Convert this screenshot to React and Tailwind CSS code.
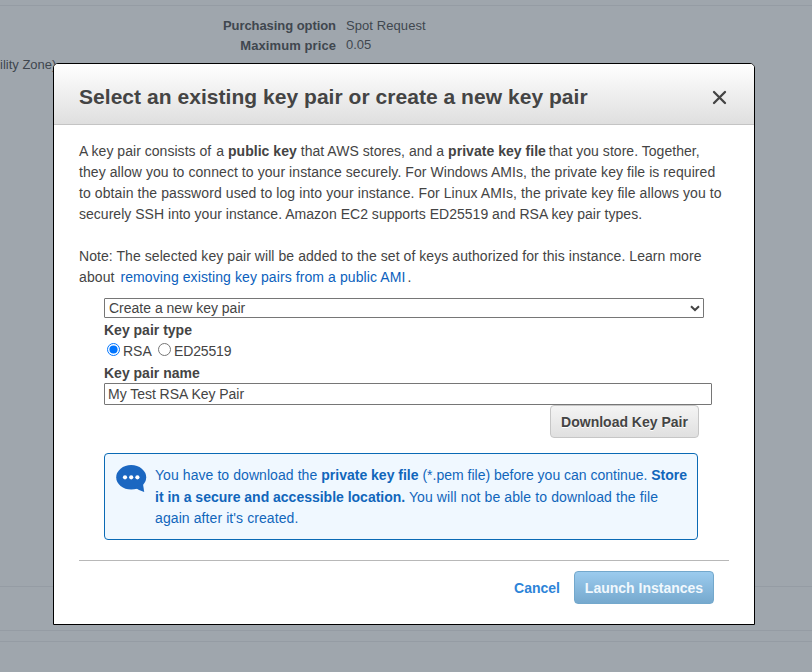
import React from "react";

function Line({ className = "", children }) {
  return (
    <div className="h-[21px] whitespace-nowrap">
      <span className={className}>{children}</span>
    </div>
  );
}

function PageBehind() {
  return (
    <div className="flex h-full flex-col text-[13px] text-[#40474f]">
      <div className="h-[6px] border-b border-[#959ca4]" />
      <div className="flex h-[581px] flex-col border-b border-[#959ca4] pt-[10px]">
        <div className="flex h-[20px] gap-[10px] leading-[20px]">
          <div className="w-[336px] text-right font-bold tracking-[-0.06px]">Purchasing option</div>
          <div className="tracking-[0.08px]">Spot Request</div>
        </div>
        <div className="flex h-[20px] gap-[10px] leading-[20px]">
          <div className="w-[336px] text-right font-bold tracking-[0.08px]">Maximum price</div>
          <div className="-mt-px">0.05</div>
        </div>
        <div className="-mt-[1px] leading-[20px]">ility Zone)</div>
      </div>
      <div className="h-[44px] border-b border-[#959ca4]" />
      <div className="h-[11px] border-b border-[#959ca4]" />
    </div>
  );
}

function Radio({ checked }) {
  return (
    <svg width="13" height="13" viewBox="0 0 13 13" className="shrink-0">
      <circle cx="6.5" cy="6.5" r="6" fill="#fff" stroke={checked ? "#0075ff" : "#767676"} />
      {checked && <circle cx="6.5" cy="6.5" r="4.1" fill="#0075ff" />}
    </svg>
  );
}

export default function App() {
  return (
    <div className="relative h-[672px] w-[812px] overflow-hidden bg-[#9fa6ad] font-['Liberation_Sans',Arial,sans-serif]">
      <PageBehind />
      <div className="absolute left-[53px] top-[63px] flex h-[562px] w-[702px] flex-col rounded-t-[5px] border border-black bg-white text-[14px] leading-[21px] text-[#444]">
        <div className="flex h-[61px] shrink-0 items-center justify-between rounded-t-[4px] border-b border-[#c4c4c4] bg-linear-to-b from-white to-[#dfdfdf] pl-[25px] pr-[27px]">
          <h1 className="mt-[5px] whitespace-nowrap text-[21px] font-bold leading-[26px] tracking-[0.04px]">
            Select an existing key pair or create a new key pair
          </h1>
          <svg width="15" height="15" viewBox="0 0 15 15" className="mt-[7px]" stroke="#444" strokeWidth="2.3" strokeLinecap="round">
            <path d="M2 2 13 13M13 2 2 13" />
          </svg>
        </div>

        <div className="px-[25px] pt-[16px]">
          <Line className="tracking-[0.035px]">A key pair consists of<span className="ml-px"> a </span><b>public key</b> that AWS stores, and a <b>private key file</b><span className="-ml-px"> that you store. Together,</span></Line>
          <Line className="tracking-[0.068px]">they allow you to connect to your instance securely. For Windows AMIs, the private key file is required</Line>
          <Line className="tracking-[0.088px]">to obtain the password used to log into your instance. For Linux AMIs, the private key file allows you to</Line>
          <Line className="tracking-[0.024px]">securely SSH into your instance. Amazon EC2 supports ED25519 and RSA key pair types.</Line>
          <div className="h-[21px]" />
          <Line className="tracking-[0.064px]">Note: The selected key pair will be added to the set of keys authorized for this instance. Learn more</Line>
          <Line className="tracking-[0.09px]">about <a className="ml-[2px] text-[#0b61bd]">removing existing key pairs from a public AMI</a><span className="ml-[2px]">.</span></Line>
        </div>

        <div className="mt-[10px] flex flex-col pl-[50px]">
          <div className="flex h-[20px] w-[600px] items-center justify-between rounded-[1px] border border-[#767676] pl-[4px] pr-[3px]">
            <span>Create a new key pair</span>
            <svg width="10" height="7" viewBox="0 0 10 7" fill="none" stroke="#444" strokeWidth="2">
              <path d="M1 1.2 5 5 9 1.2" />
            </svg>
          </div>
          <div className="mt-[2px] h-[21px] font-bold">Key pair type</div>
          <div className="flex h-[21px] items-center">
            <div className="ml-[3px] -mt-[4px] flex"><Radio checked /></div>
            <span className="ml-[3px] w-[35px]">RSA</span>
            <div className="-mt-[4px] flex"><Radio /></div>
            <span className="ml-[3px] tracking-[-0.15px]">ED25519</span>
          </div>
          <div className="h-[21px] pt-px font-bold">Key pair name</div>
          <div className="flex h-[22px] w-[608px] items-center rounded-[1px] border border-[#767676] pl-[3px] tracking-[-0.03px]">
            My Test RSA Key Pair
          </div>
          <button className="ml-[446px] flex h-[33px] w-[149px] items-center justify-center rounded-[4px] border border-[#c6c6c6] bg-linear-to-b from-[#f4f4f4] to-[#e0e0e0] pt-[2px] font-bold whitespace-nowrap [text-shadow:0_1px_0_#fff]">
            Download Key Pair
          </button>
          <div className="mt-[15px] flex h-[87px] w-[594px] rounded-[4px] border border-[#0a6ab5] bg-[#f0f8ff] pl-[11px] pt-[11px] text-[#1166bb]">
            <svg width="31" height="28" viewBox="0 0 31 28" className="shrink-0">
              <ellipse cx="15.2" cy="12.3" rx="15" ry="12.2" fill="#1b67c1" />
              <path d="M18 22Q23 25.5 28.2 27.1L27 19Z" fill="#1b67c1" />
              <g fill="#fff">
                <circle cx="9" cy="12.3" r="2.1" />
                <circle cx="15.2" cy="12.3" r="2.1" />
                <circle cx="21.4" cy="12.3" r="2.1" />
              </g>
            </svg>
            <div className="ml-[8px]">
              <Line><span className="tracking-[0.07px]">You have to download the </span><b>private key file</b> (*.pem file) before you can continue. <b>Store</b></Line>
              <div className="mt-px">
                <Line><b className="tracking-[-0.01px]">it in a secure and accessible location.</b><span className="tracking-[0.11px]"> You will not be able to download the file</span></Line>
                <Line className="tracking-[0.09px]">again after it's created.</Line>
              </div>
            </div>
          </div>
        </div>

        <div className="mx-[25px] mt-[20px] border-t border-[#b8b8b8]" />
        <div className="mt-[10px] flex items-center justify-end pr-[40px] font-bold">
          <a className="mr-[14px] pt-[2px] text-[#2d84d8]">Cancel</a>
          <button className="flex h-[33px] w-[140px] items-center justify-center whitespace-nowrap rounded-[4px] border border-[#73a8cc] bg-linear-to-b from-[#9bcbee] to-[#76a9ce] pt-[2px] text-[#f1f8fd]">
            Launch Instances
          </button>
        </div>
      </div>
    </div>
  );
}
